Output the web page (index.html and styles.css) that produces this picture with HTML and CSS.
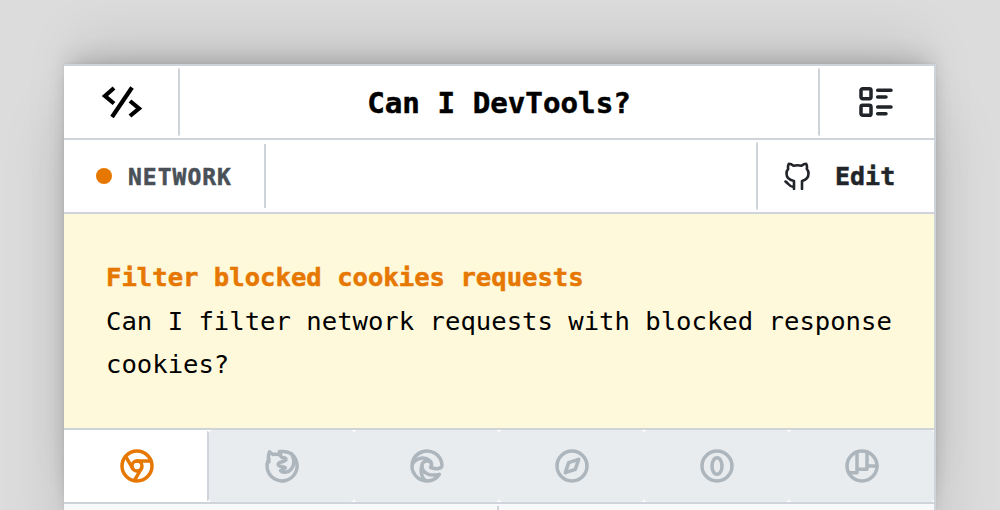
FILE: index.html
```
<!DOCTYPE html>
<html lang="en">
<head>
<meta charset="utf-8">
<title>Can I DevTools?</title>
<link rel="stylesheet" href="styles.css">
</head>
<body>
<main class="card">
  <header class="row">
    <a class="logo"><svg class="code" viewBox="0 0 44 36"><path d="M14 4 5 12l9 7.500M32 3.500 12 33M30 17l9 7.500-9 7.500"/></svg></a>
    <h1 class="title">Can I DevTools?</h1>
    <a class="menu"><svg class="icon" viewBox="0 0 24 24"><path d="M13 5h8M13 9h5M13 15h8M13 19h5"/><rect x="3" y="4" width="6" height="6" rx="1"/><rect x="3" y="14" width="6" height="6" rx="1"/></svg></a>
  </header>
  <div class="row">
    <div class="category"><span class="dot"></span>NETWORK</div>
    <a class="edit"><svg class="github" viewBox="0 0 28 28"><path d="M10 27v-8C5 18 2.500 15.500 2.500 11.500c0-2 .6-3.500 1.700-4.700C3.800 5 4 3.200 4.800 1.800c1.800 0 3.400.8 4.700 1.900 2.700-.6 5.400-.6 8 0 1.300-1.100 2.900-1.900 4.700-1.900.8 1.400 1 3.200.6 5 1.100 1.200 1.700 2.700 1.700 4.700 0 4-2.500 6.500-6.500 7.500v8M10 25c-4.500.5-5-3.500-8.500-5.500"/></svg>Edit</a>
  </div>
  <section class="intro">
    <h2 class="question">Filter blocked cookies requests</h2>
    <p class="text">Can I filter network requests with blocked response cookies?</p>
  </section>
  <nav class="row tabs">
    <a class="tab active"><svg class="icon" viewBox="0 0 24 24"><circle cx="12" cy="12" r="9"/><circle cx="12" cy="12" r="3"/><path d="M12 9h8.400M14.600 13.500l-4.200 7.300M9.400 13.500 5.200 6.200"/></svg></a>
    <a class="tab"><svg class="icon" viewBox="0 0 24 24"><path d="M4.200 7.500a9 9 0 1 0 12.800-3.100c-1.400-.9-2.800-1.100-4.600-1.100h-1.900M4.200 9.500C3.600 7.500 3.900 5 4.500 3.500l2 1.600c1.100-.2 2.200-.2 3.300 0 .4-.9.800-1.500 1.400-1.700-.5 1.600-.3 2.600.6 3.300 1 .6 2.700.2 2.600 1.300-.1 1.700-4.800 1.200-4.700 3.100.1 1.600 3 .8 4.300 1.900-.6.900-1.900 1.200-2.900 1.700 1.200 1.700 4.900 1.300 6.500-.8 1.700-2.300 2-5.700.2-9.200"/></svg></a>
    <a class="tab"><svg class="icon" viewBox="0 0 24 24"><path d="M20.978 11.372a9 9 0 1 0-1.593 5.773M20.978 11.372c.21 2.993-5.034 2.413-6.913 1.486 1.392-1.600.402-4.038-2.274-3.851-1.745.122-2.927 1.157-2.784 3.202.28 3.990 4.444 6.205 10.360 4.790M3.022 12.628C2.739 8.580 9.500 5.300 13.500 8.600c1.100.9 1.500 2.300.9 3.800M12.628 20.978c-2.993.21-5.162-4.725-3.567-9.748"/></svg></a>
    <a class="tab"><svg class="icon" viewBox="0 0 24 24"><path d="m8 16 2-6 6-2-2 6-6 2"/><circle cx="12" cy="12" r="9"/></svg></a>
    <a class="tab"><svg class="icon" viewBox="0 0 24 24"><circle cx="12" cy="12" r="9"/><ellipse cx="12" cy="12" rx="3" ry="5"/></svg></a>
    <a class="tab"><svg class="icon" viewBox="0 0 24 24"><circle cx="12" cy="12" r="9"/><path d="M9 3.500V16H4M9 14h6V3.500M15 12h6"/></svg></a>
  </nav>
  <div class="details"><div></div><div class="second"></div></div>
</main>
</body>
</html>
```
FILE: styles.css
```
* { box-sizing: border-box; }
body {
  margin: 0;
  height: 510px;
  padding: 64px 64px 0;
  overflow: hidden;
  background: #dcdcdc;
  color: #000;
  font-family: "DejaVu Sans Mono", "Liberation Mono", monospace;
}
.card {
  height: 446px;
  border-top: 2px solid #ced4da;
  border-right: 2px solid #ced4da;
  background: #fff;
  box-shadow:
    0 -1px 3px rgba(0,0,0,.05),
    0 -12px 20px -6px rgba(0,0,0,.15),
    0 -36px 50px -12px rgba(0,0,0,.1),
    0 12px 12px rgba(0,0,0,.05),
    0 50px 60px rgba(0,0,0,.13);
}
.row {
  display: flex;
  height: 74px;
  border-bottom: 2px solid #ced4da;
}
.row svg, .edit svg { flex: none; fill: none; stroke: currentColor; stroke-linecap: round; stroke-linejoin: round; }
.icon { width: 40px; height: 40px; stroke-width: 2.100; }
.logo, .menu {
  display: flex;
  width: 116px;
  margin: 2px 0;
  align-items: center;
  justify-content: center;
}
.logo { padding-left: 2px; border-right: 2px solid #ced4da; border-radius: 2px; }
.menu { padding-right: 2px; border-left: 2px solid #ced4da; color: #212529; border-radius: 2px; }
.row .code { width: 44px; height: 36px; stroke-width: 4.200; stroke-linecap: butt; stroke-linejoin: miter; }
.title, .category, .edit, .question { -webkit-text-stroke: .5px currentColor; }
.title {
  flex: 1;
  margin: 0;
  font-size: 29.200px;
  line-height: 74px;
  text-align: center;
}
.category {
  display: flex;
  align-items: center;
  gap: 16px;
  width: 202px;
  height: 64px;
  margin-top: 4px;
  padding: 2px 0 0 32px;
  border-right: 2px solid #ced4da;
  color: #495057;
  font-size: 23px;
  font-weight: 700;
  letter-spacing: 1px;
}
.dot { width: 16px; height: 16px; margin-top: -2px; border-radius: 50%; background: #e67700; }
.edit {
  display: flex;
  align-items: center;
  gap: 23px;
  width: 178px;
  height: 68px;
  margin: 2px 0 0 auto;
  padding-left: 26px;
  border-left: 2px solid #ced4da;
  border-radius: 2px;
  color: #212529;
  font-size: 25px;
  font-weight: 700;
}
.edit .github { width: 28px; height: 28px; stroke-width: 2.600; }
.intro {
  height: 216px;
  padding: 42px 42px 0;
  border-bottom: 2px solid #ced4da;
  background: #fff9db;
  font-size: 25.600px;
  line-height: 43.500px;
}
.question { margin: 0; color: #e67700; font-size: inherit; }
.text { margin: 0; }
.tab {
  display: flex;
  flex: 0 0 145px;
  align-items: center;
  justify-content: center;
  border-radius: 4px;
  background: #e9ecef;
  color: #adb5bd;
}
.tab.active {
  margin: 1px 0;
  padding-left: 2px;
  border-right: 2px solid #ced4da;
  border-radius: 2px;
  background: #fff;
  color: #e67700;
}
.details { display: grid; grid-template-columns: 1fr 1fr; height: 6px; background: #f8f9fa; }
.second { margin: 2px 0 0 -2px; border-left: 2px solid #ced4da; }
```
